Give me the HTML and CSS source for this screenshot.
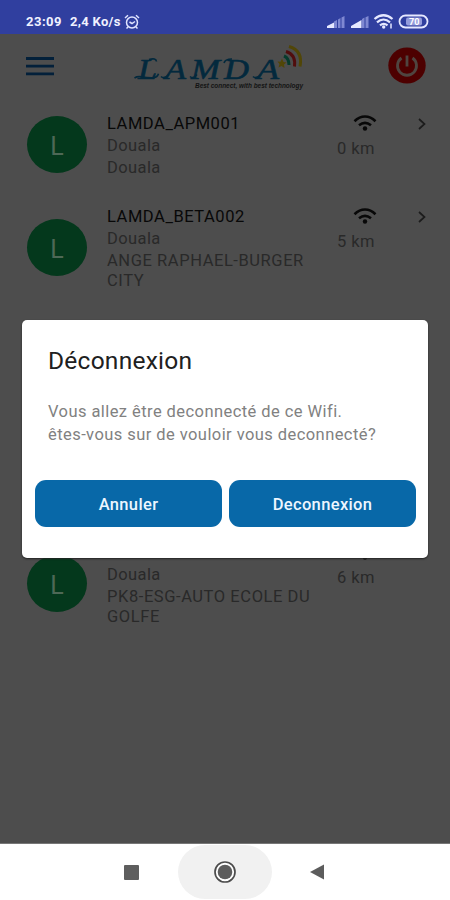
FILE: index.html
```
<!DOCTYPE html>
<html lang="fr">
<head>
<meta charset="utf-8">
<title>Lamda</title>
<link rel="stylesheet" href="styles.css">
</head>
<body>
<svg width="0" height="0" class="defs">
  <symbol id="wifi" viewBox="0 0 24 17"><path d="M1.500 6.200C8-.1 16-.1 22.500 6.200M6 10.300c4-3.300 8-3.300 12 0" fill="none" stroke="currentColor" stroke-width="2.600"/><circle cx="12" cy="13.500" r="2.200" fill="currentColor"/></symbol>
  <symbol id="chev" viewBox="0 0 8 12"><path d="M1 1l5.500 5L1 11" fill="none" stroke="currentColor" stroke-width="1.700"/></symbol>
</svg>
<div class="phone">
  <div class="status">
    <span class="time">23:09</span><span class="rate">2,4 Ko/s</span>
    <svg class="alarm" width="16" height="16" viewBox="0 0 16 16" fill="none" stroke="#dfe3ff" stroke-width="1.500"><circle cx="8" cy="8.500" r="5.500"/><path d="M1 4l3-2.800M15 4l-3-2.800M5.500 8L8 9.500 11 7.500M4 13l-1.500 1.500M12 13l1.500 1.500"/></svg>
    <svg class="signals" width="106" height="18" viewBox="0 0 106 18">
      <g fill="#7f88d2"><path d="M8 8.500l3-1.500v8H8zM12 6.500l2.500-1.500v10H12zM15.500 4.500L18.500 3v12h-3z"/><path d="M36 6l2.500-1.500V15H36zM39.500 4.200L42.500 3v12h-3z"/></g>
      <path d="M1 15v-2l7-3.500V15zM25 15v-2l10.500-6v8z" fill="#e5e8ff"/>
      <g fill="none" stroke="#e5e8ff" stroke-width="2.200"><path d="M48.500 6c6-5 12-5 18 0M51 9.300c4-3.500 9-3.500 13 0M54 12.300c2.500-2 5-2 7.500 0"/><rect x="73.500" y="2.500" width="28" height="12" rx="6" stroke-width="1.800"/></g>
      <circle cx="57.700" cy="14" r="1.700" fill="#e5e8ff"/><path d="M65 10.500v5" stroke="#e5e8ff" stroke-width="1.500"/>
      <rect x="80" y="4.500" width="16" height="8" rx="2" fill="#949cdb"/>
      <text x="83" y="12" class="battery">70</text>
    </svg>
  </div>
  <main class="screen">
    <header class="bar">
      <svg width="28" height="19" viewBox="0 0 28 19"><path d="M0 1.500h28M0 9.200h28M0 16.800h28" stroke="#03203a" stroke-width="2.800"/></svg>
      <svg class="logo" width="176" height="54" viewBox="0 0 176 54">
        <g class="brand"><text x="5" y="35.500" textLength="19" lengthAdjust="spacingAndGlyphs">L</text><text x="32" y="35.500" textLength="21" lengthAdjust="spacingAndGlyphs">A</text><text x="58" y="35.500" textLength="29" lengthAdjust="spacingAndGlyphs">M</text><text x="91" y="35.500" textLength="25" lengthAdjust="spacingAndGlyphs">D</text><text x="124" y="35.500" textLength="22" lengthAdjust="spacingAndGlyphs">A</text></g>
        <path d="M1.500 35q3-2 8-1t11 .8q4-.5 5-4M16 16.500q7-2 7.500 2M28 33.500q3 3 8-2M57 33.500q3 3 7-2M91 20q1-4 8-4M120 33.500q3 3 8-2" fill="none" stroke="#03293d" stroke-width="1.600"/>
        <g fill="none" stroke-width="3"><path d="M151 13q5 2 5 9" stroke="#063b2c"/><path d="M153 8.500q10 3 8.500 15" stroke="#510d0d"/><path d="M156 3.500q14 4 11 20" stroke="#514607"/></g>
        <path d="M149 15.500l1.500 3.500 3 .5-2.500 2 .5 3.500-3-2-3 1.500 1-3.500-2-2.500 3 .2z" fill="#514607"/>
        <text x="62" y="44.500" class="tag" textLength="108" lengthAdjust="spacingAndGlyphs">Best connect, with best technology</text>
      </svg>
      <svg class="power" width="38" height="37" viewBox="0 0 38 37"><ellipse cx="19" cy="18.500" rx="18.700" ry="18" fill="#4d0000"/><path d="M13.500 11a9.500 9.500 0 1 0 11 0M19 8.500v11" fill="none" stroke="#4f4540" stroke-width="2.800"/></svg>
    </header>
    <section class="list">
      <article class="row first">
        <div class="avatar">L</div>
        <div class="info"><h2>LAMDA_APM001</h2><p>Douala</p><p>Douala</p></div>
        <div class="dist"><svg width="24" height="17"><use href="#wifi"/></svg><span>0 km</span></div>
        <svg class="chev" width="8" height="12"><use href="#chev"/></svg>
      </article>
      <article class="row second">
        <div class="avatar">L</div>
        <div class="info"><h2>LAMDA_BETA002</h2><p>Douala</p><p class="place">ANGE RAPHAEL-BURGER<br>CITY</p></div>
        <div class="dist"><svg width="24" height="17"><use href="#wifi"/></svg><span>5 km</span></div>
        <svg class="chev" width="8" height="12"><use href="#chev"/></svg>
      </article>
      <article class="row last">
        <div class="avatar">L</div>
        <div class="info"><h2></h2><p>Douala</p><p class="place">PK8-ESG-AUTO ECOLE DU<br>GOLFE</p></div>
        <div class="dist"><svg width="24" height="17"><use href="#wifi"/></svg><span>6 km</span></div>
      </article>
    </section>
    <div class="dialog" role="dialog">
      <h1>Déconnexion</h1>
      <p class="msg">Vous allez être deconnecté de ce Wifi.<br>êtes-vous sur de vouloir vous deconnecté?</p>
      <div class="actions"><button>Annuler</button><button>Deconnexion</button></div>
    </div>
  </main>
  <nav class="nav">
    <svg width="15" height="15"><rect width="15" height="15" rx="1" fill="#5e5e5e"/></svg>
    <div class="home"><svg width="24" height="24" viewBox="0 0 24 24"><circle cx="12" cy="12" r="10" fill="#fff" stroke="#4c4c4c" stroke-width="1.700"/><circle cx="12" cy="12" r="7.300" fill="#5c5c5c"/></svg></div>
    <svg width="15" height="16"><path d="M0 8L14 .5v15z" fill="#5c5c5c"/></svg>
  </nav>
</div>
</body>
</html>
```
FILE: styles.css
```
* { box-sizing: border-box; }
body { margin: 0; font-family: Roboto, sans-serif; }
h1, h2, p { margin: 0; font-weight: 400; }
.defs { display: block; }
.phone { width: 450px; height: 900px; display: flex; flex-direction: column; overflow: hidden; background: #fff; }
.status { height: 34px; flex: none; background: #303f9f; color: #f0f2ff; display: flex; align-items: center; padding: 9px 18px 0 26px; font-size: 13px; font-weight: 700; }
.time { width: 44px; letter-spacing: .5px; }
.rate { width: 54px; letter-spacing: .3px; white-space: nowrap; }
.signals { margin-left: auto; }
.battery { font-size: 9px; font-weight: 700; fill: #fff; }
.screen { height: 810px; flex: none; position: relative; background: #4d4d4d; border-bottom: 1px solid #777; }
.bar { height: 75px; padding: 10px 24px 0 26px; display: flex; align-items: flex-start; }
.bar > svg:first-child { margin-top: 13px; }
.logo { margin-left: 79px; margin-top: -1px; }
.power { margin-left: auto; margin-top: 3px; }
.brand { font-family: "Liberation Serif", serif; font-style: italic; font-weight: 400; font-size: 30px; fill: #03293d; stroke: #03293d; stroke-width: .6px; }
.tag { font-family: "Liberation Sans", sans-serif; font-style: italic; font-weight: 700; font-size: 6.5px; fill: #141414; }
.row { display: grid; grid-template-columns: 60px 210px 58px 1fr; column-gap: 20px; align-items: start; padding: 0 0 0 27px; }
.first { height: 93px; }
.second { height: 336px; }
.avatar { width: 60px; height: 57px; margin-top: 7px; border-radius: 50%; background: #04381c; color: #4e6856; font-size: 25px; line-height: 61px; text-align: center; }
.second .avatar, .last .avatar { margin-top: 17px; }
.info { padding-top: 3px; white-space: nowrap; }
.info h2 { font-size: 16.5px; line-height: 23px; height: 23px; letter-spacing: .55px; color: #080808; }
.info p { font-size: 16.5px; line-height: 22px; letter-spacing: .4px; color: #292929; }
.info .place { line-height: 20px; padding-top: 1px; letter-spacing: .57px; }
.dist { padding-top: 6px; display: flex; flex-direction: column; align-items: center; width: 58px; margin-left: -1px; color: #080808; }
.dist span { font-size: 16.5px; line-height: 20px; letter-spacing: .5px; margin: 7px 18px 0 0; color: #292929; white-space: nowrap; }
.chev { margin: 9px 0 0 3px; color: #1c1c1c; }
.dialog { position: absolute; left: 22px; top: 286px; width: 406px; height: 238px; border-radius: 5px; background: #fff; padding: 26px 12px 30px 13px; box-shadow: 0 1px 2px #222; }
.dialog h1 { margin-left: 13px; font-size: 24.5px; line-height: 30px; letter-spacing: .25px; color: #202020; }
.msg { margin: 24px 0 0 13px; font-size: 16.5px; line-height: 23px; letter-spacing: .43px; color: #818181; white-space: nowrap; }
.actions { display: flex; gap: 7px; margin-top: 34px; }
.actions button { flex: 1; height: 47px; border: 0; border-radius: 11px; background: #0868a8; color: #edf6ff; font: 500 16.5px Roboto, sans-serif; letter-spacing: .35px; padding-top: 3px; }
.nav { flex: 1; display: flex; align-items: center; padding: 0 0 0 124px; }
.home { width: 94px; height: 54px; margin: 0 38px 0 39px; border-radius: 27px; background: #f1f1f1; display: flex; align-items: center; justify-content: center; }
```
